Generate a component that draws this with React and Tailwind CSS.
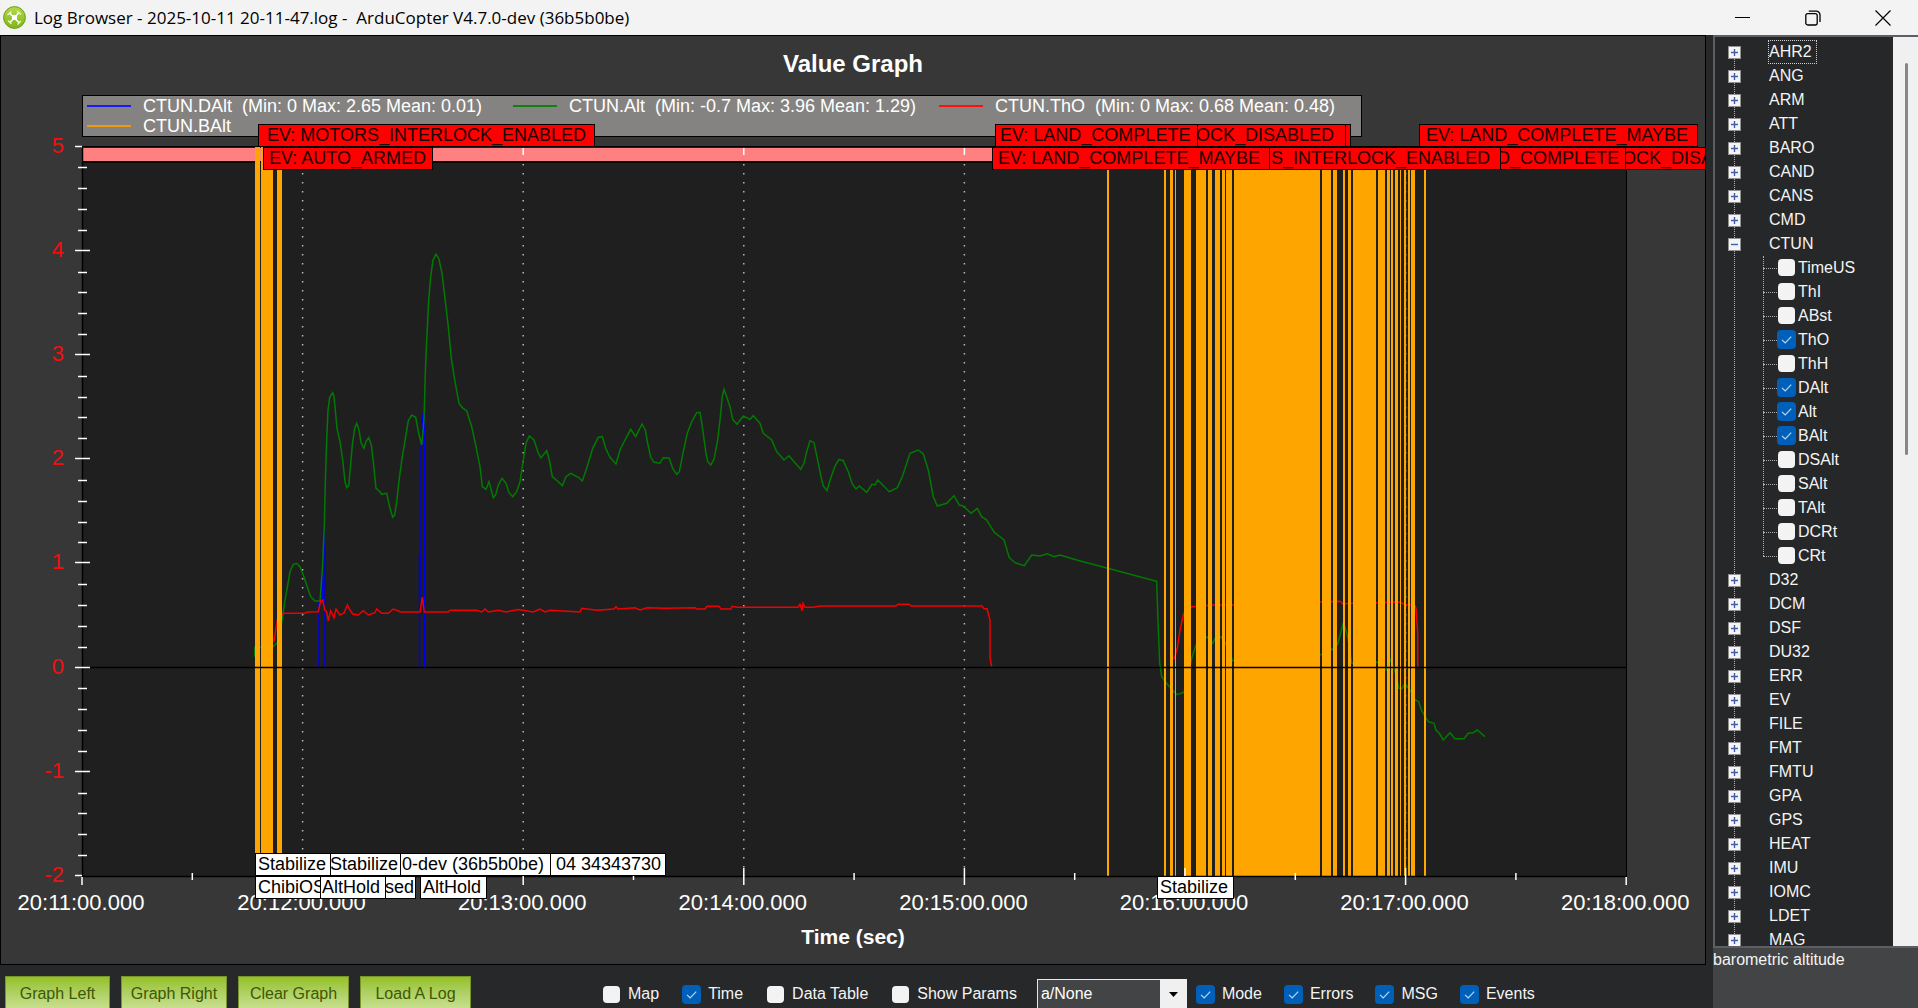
import { useState } from "react";

const ALT_A =
  "254.7,656.7 254.7,647.3 273,646.7 278,641.7 282.7,616.7 285,600 287.7,585 290,571.7 293.3,564.3 296.7,563.3 300,566.7 303.3,575 306.7,585 310.7,596.7 315,601 320,601 322.3,570 324.3,526.7 325.3,483.3 326.7,440 328,410 329.7,397.3 332.7,392.7 334,396.7 335.3,410 337,428.3 340,441.7 342.7,460 345,481.7 346.7,487.7 348.7,486 350.3,468.3 352.3,445 354.7,428.3 356.7,423.3 359,430 361,442.7 364,448.3 366,441.7 368.7,437.7 371.3,445 373.3,461.7 376,488.3 379.3,491 381.7,494.3 386.7,493.3 390,508.3 392.7,517.3 394.7,515 396.7,501.7 399.3,478.3 402.3,456.7 405.7,436.7 408.3,420.7 411.7,415 415.7,417.3 418.7,433.3 421.7,445 424,420 425.3,373.3 426.7,340 428.7,300 430.7,276.7 433,260 436,254.3 438.7,258.3 442,273.3 445,298.3 448.3,326.7 451.3,358.3 455,381.7 459,403.3 462.3,407.7 466.7,411 471.7,426.7 476,446.7 480,466.7 482.3,486.7 486,489.3 489,481.7 493.3,497.7 495.7,495 498.3,485 502,478.3 506,483.3 509,492.7 512.7,496.7 516.7,491.7 520,481.7 523.3,460 526,443.3 529.3,436 534,440 538.3,453.3 541,457.7 546.7,450.7 549.3,460 552.3,476.7 558.3,481.7 562.3,485.7 566,476.7 570.7,473.3 578.3,477.3 582.3,481 586.7,468.3 592.7,448.3 598.3,437.3 602.3,436.7";

const ALT_B =
  "605.7,448.3 610,457.3 616,464 620,450 625,440 630.7,429.3 635.7,436.7 642,424 645.3,430 647.7,443.3 650.7,457.3 654,462.3 660,463.3 663.3,457.7 669.3,458.3 672.7,468.3 676.7,474.3 679.3,471.7 683.3,451.7 687.3,433.3 691.7,421.7 696.7,412.7 700,412.3 702.3,426.7 706,453.3 707.7,461.7 710.7,465 714,459.3 717.7,440 720,420 722.3,396.7 724,389.3 726.7,396.7 730,406.7 732.7,419.3 737,424.3 743.3,416 750,419.3 753.3,415.7 760,423.3 763.3,433.3 771.7,440 776.7,451.7 784,460 789,455.7 795,462.7 800.7,469.3 804,463.3 806.7,451.7 810,440.7 814,442.7 817.3,458.3 821,476.7 823.3,486 827,490.7 830.7,478.3 835,466 839,459.3 843.3,460.7 848.3,471.7 852.3,484 856,489 859.3,486 866.7,492.3 872,484.3 875,485 877.7,480 882.7,485 889.3,491.7 897.3,487.7 902.3,476.7 910,453.3 918.3,450 923.3,454 928.3,470 933.3,496.7 937.3,506 946.7,503.3 954,495.7 959.3,505 963.3,506 971,513.3 977.3,508.3 981.7,516.7 986.7,520 994.3,532.3 1004,540 1009.3,557.7 1015,562.7 1024.3,565.7 1031.7,555 1040,556 1047.3,553.7 1054,556.7 1060,555 1076.7,560 1156.7,581.3 1158,621 1159.7,663.3 1161.7,676.7 1167.3,684.3 1174,691.7 1177.3,694.7 1184,692.3 1191.7,658.3 1196,645 1206.7,636.7 1212.7,643.3 1215,638.3 1220.7,636.7 1225.3,642.7 1232.7,660.7 1320.7,654.7 1332.3,649.3 1337.7,644 1343,624 1345,627.3 1347.7,636.7 1351.7,663.3 1376.7,662 1386,670 1390.3,660 1394.7,670 1399,688.3 1401.7,689 1405,683.3 1411,691.7 1415.3,700 1418.7,701.7 1421.7,710.7 1428.3,721.7 1434,723.3 1436,730 1439.3,733.3 1443.3,740 1450,732.7 1455,738.7 1464,738.7 1468.3,733.3 1473.3,732.7 1477.3,730 1485,736.7";

const THO_FLIGHT_1 =
  "274,641.7 277.3,620 283.3,613.3 305,613.3 307,612 318.3,611.7 320.7,600.7 322.7,600 324.7,610 326.7,611.7 328.3,620.7 330.7,610.7 334,617.7 336,609 340,615 344,613 347.3,605 350,610 352.7,614 358.3,615 363.3,610.7 368.3,615 375,612.7 376.7,609 381.7,613.3 388.3,613.3 393.3,609 400.7,612 420,612 422.3,597.3 424.3,612 448.3,612 450,610.3 476.7,610.3 481.7,612 485,609 488.3,612 498.3,610.3 506,612 518.3,609.5 533.3,612 540,609 545,612 550,610.3 580,612 581.7,608.3 596.7,610.3 614,609 616,606.7 618,609 635,607.7 640,610 647,607.7 665,608.3 695,607.7 697,609 705,609 707,606.3 719,606.3 721,609 731,609 732,606.3 737,607.3 798,607.3 800,604.3 802,610.7 803,603.3 805,607.3 813,607.3 820,606 896,606 898,604.3 909,604.3 911,606 982,606 984,608.7 987,608.7 990,620 990,658 991.7,666.7";

const THO_FLIGHT_2 =
  "1174,659.3 1177.3,648.3 1180,630 1183.7,613.3 1191.7,606.7 1213,605 1233,605 1320.7,602 1340,601.3 1343,604 1351.7,603.3 1376.7,602.7 1400,602 1405,604.7 1414.3,604.7 1416,608 1417.7,633.3 1417.7,666.7";

// [x, width] of every stretch where BAlt leaves the visible range
const BALT_BARS = [
  [255, 5],
  [261, 12],
  [277, 5],
  [1107, 2],
  [1164, 2],
  [1170, 3],
  [1175, 1],
  [1184, 7],
  [1196, 10],
  [1208, 4],
  [1215, 5],
  [1222, 3],
  [1226, 6],
  [1234, 86],
  [1322, 9],
  [1333, 4],
  [1343, 2],
  [1348, 3],
  [1353, 23],
  [1378, 7],
  [1387, 3],
  [1391, 2],
  [1395, 3],
  [1400, 1],
  [1404, 2],
  [1408, 2],
  [1411, 4],
  [1424, 2],
];

const DALT_LINES = [
  [319, 601, 667],
  [321, 588, 601],
  [322.7, 557, 600],
  [323.7, 518, 557],
  [325, 527, 667],
  [419.5, 554, 667],
  [421, 446, 597],
  [422.5, 414, 446],
  [424.5, 392, 667],
];

const EVENTS_TOP = [
  { x: 1190, end: 1351, tx: 0, text: "" },
  { x: 1190, end: 1346, tx: 1196, text: "OCK_DISABLED" },
  { x: 996, end: 1198, tx: 1000, text: "EV: LAND_COMPLETE" },
  { x: 1420, end: 1698, tx: 1426, text: "EV: LAND_COMPLETE_MAYBE" },
  { x: 259, end: 595, tx: 267, text: "EV: MOTORS_INTERLOCK_ENABLED" },
];

const EVENTS_BOTTOM = [
  { x: 1610, end: 1720, tx: 1622, text: "OCK_DISA" },
  { x: 1490, end: 1626, tx: 1497, text: "D_COMPLETE" },
  { x: 1260, end: 1501, tx: 1271, text: "S_INTERLOCK_ENABLED" },
  { x: 993, end: 1270, tx: 998, text: "EV: LAND_COMPLETE_MAYBE" },
  { x: 264, end: 433, tx: 269, text: "EV: AUTO_ARMED" },
];

const MESSAGES_TOP = [
  { x: 540, end: 666, tx: 556, text: "04 34343730" },
  { x: 380, end: 551, tx: 402, text: "0-dev (36b5b0be)" },
  { x: 331, end: 401, tx: 330, text: "Stabilize" },
  { x: 256, end: 331, tx: 258, text: "Stabilize" },
];

const MESSAGES_BOTTOM = [
  { x: 380, end: 416, tx: 385, text: "sed" },
  { x: 256, end: 386, tx: 258, text: "ChibiOS" },
  { x: 321, end: 386, tx: 322, text: "AltHold" },
  { x: 421, end: 487, tx: 423, text: "AltHold" },
  { x: 1158, end: 1234, tx: 1160, text: "Stabilize" },
];

const X_LABELS = ["20:11", "20:12", "20:13", "20:14", "20:15", "20:16", "20:17", "20:18"];
const Y_LABELS = [5, 4, 3, 2, 1, 0, -1, -2];

const xOf = (minute) => 82 + minute * 220.6;
const yOf = (value) => 667.5 - value * 104.2;

const legend = [
  { name: "CTUN.DAlt  (Min: 0 Max: 2.65 Mean: 0.01)", line: "bg-[#1a1aff]" },
  { name: "CTUN.Alt  (Min: -0.7 Max: 3.96 Mean: 1.29)", line: "bg-[#118011]" },
  { name: "CTUN.ThO  (Min: 0 Max: 0.68 Mean: 0.48)", line: "bg-[#ff1010]" },
  { name: "CTUN.BAlt", line: "bg-[#ee9a10]" },
];

const ctunFields = [
  ["TimeUS", false],
  ["ThI", false],
  ["ABst", false],
  ["ThO", true],
  ["ThH", false],
  ["DAlt", true],
  ["Alt", true],
  ["BAlt", true],
  ["DSAlt", false],
  ["SAlt", false],
  ["TAlt", false],
  ["DCRt", false],
  ["CRt", false],
];

const nodesBefore = ["AHR2", "ANG", "ARM", "ATT", "BARO", "CAND", "CANS", "CMD"];
const nodesAfter = [
  "D32", "DCM", "DSF", "DU32", "ERR", "EV", "FILE", "FMT",
  "FMTU", "GPA", "GPS", "HEAT", "IMU", "IOMC", "LDET", "MAG",
];

function Check({ label, defaultChecked, className }) {
  const [checked, setChecked] = useState(defaultChecked);
  return (
    <label className={`flex whitespace-nowrap ${className}`}>
      <span className="relative flex size-[19px] shrink-0">
        <input
          type="checkbox"
          checked={checked}
          onChange={(e) => setChecked(e.target.checked)}
          className="m-px size-[17px] appearance-none rounded-[4px] bg-[#f3f3f3] checked:m-0 checked:size-[19px] checked:bg-[#005fb8]"
        />
        {checked && (
          <svg className="pointer-events-none absolute inset-0" width="19" height="19" viewBox="0 0 19 19">
            <path d="M5 9.8 8.2 13 14.2 6.6" fill="none" stroke="#b9d8f2" strokeWidth="1.2" />
          </svg>
        )}
      </span>
      <span>{label}</span>
    </label>
  );
}

function Tags({ items, y, fill, color }) {
  return items.map((t) => (
    <g key={`${t.x}-${t.end}`}>
      <rect x={t.x - 0.5} y={y + 0.5} width={t.end - t.x} height="22" fill={fill} stroke="#000" />
      {t.text && (
        <text x={t.tx} y={y + 17} fontSize="18" fill={color}>
          {t.text}
        </text>
      )}
    </g>
  ));
}

function Chart() {
  return (
    <svg
      className="relative -mt-[13px] block h-auto w-full"
      viewBox="1 124 1704 792"
      fontFamily='"Liberation Sans", Arial, sans-serif'
    >
      <rect x="82.5" y="146.5" width="1544" height="730" fill="#1f1f1f" stroke="#000" />
      <rect x="83" y="148" width="1543" height="13" fill="#ff8080" />
      <path d="M83 162H1626" stroke="#000" strokeWidth="1.5" />

      {[1, 2, 3, 4, 5, 6].map((m) => (
        <path
          key={m}
          d={`M${xOf(m)} 164V876`}
          stroke="#b8b8b8"
          strokeWidth="1.5"
          strokeDasharray="1.5 7.5"
        />
      ))}

      <g fill="none" strokeWidth="1.5">
        {DALT_LINES.map(([x, y1, y2]) => (
          <path key={x} d={`M${x} ${y1}V${y2}`} stroke="#0000e6" />
        ))}
        <polyline points={`${ALT_A} ${ALT_B}`} stroke="#007a00" />
        <polyline points={THO_FLIGHT_1} stroke="#f00000" />
        <polyline points={THO_FLIGHT_2} stroke="#f00000" />
      </g>

      {BALT_BARS.map(([x, w]) => (
        <rect key={x} x={x} y="147" width={w} height="729" fill="#ffa500" />
      ))}

      <path d="M82 667.5H1626M82.5 146V877M82 876.5H1627" stroke="#000" strokeWidth="1.5" />

      {/* axis ticks */}
      <g stroke="#fff" strokeWidth="1.5">
        {Y_LABELS.map((v) => (
          <path key={v} d={`M75 ${Math.round(yOf(v)) - 0.5}H${v === 5 || v === -2 ? 82 : 90}`} />
        ))}
        {Array.from({ length: 34 }, (_, i) => i + 1)
          .filter((i) => i % 5 !== 0)
          .map((i) => (
            <path key={i} d={`M78 ${Math.round(yOf(5 - i / 5)) + 0.5}H87`} />
          ))}
        {X_LABELS.map((label, i) => (
          <path key={label} d={`M${xOf(i)} ${i === 0 || i === 7 ? 877 : 868}V885`} />
        ))}
        {[0, 1, 2, 3, 4, 5, 6].map((i) => (
          <path key={i} d={`M${xOf(i + 0.5)} 873V880`} />
        ))}
        {[1, 2, 3, 4].map((i) => (
          <path key={i} d={`M${xOf(i)} 148V155`} />
        ))}
      </g>

      <g fontSize="22">
        {Y_LABELS.map((v) => (
          <text key={v} x="64" y={Math.round(yOf(v)) + 6} textAnchor="end" fill="#f01010">
            {v}
          </text>
        ))}
        {X_LABELS.map((label, i) => (
          <text key={label} x={xOf(i) - 1} y="910" textAnchor="middle" fill="#fff">
            {`${label}:00.000`}
          </text>
        ))}
      </g>

      <Tags items={EVENTS_TOP} y={124} fill="#ff0000" color="#200000" />
      <Tags items={EVENTS_BOTTOM} y={147} fill="#ff0000" color="#200000" />
      <Tags items={MESSAGES_TOP} y={853} fill="#ffffff" color="#000000" />
      <Tags items={MESSAGES_BOTTOM} y={876} fill="#ffffff" color="#000000" />
    </svg>
  );
}

function ExpandBox({ open }) {
  return (
    <svg width="13" height="13" viewBox="0 0 13 13">
      <rect x="0.5" y="0.5" width="12" height="12" fill="#f4f4f4" stroke="#919191" />
      <path d={open ? "M3 6.5h7" : "M3 6.5h7M6.5 3v7"} stroke="#3f5fae" strokeWidth="1.4" />
    </svg>
  );
}

function TreeNode({ name, open, focused }) {
  return (
    <li className="flex h-6 items-center">
      <button type="button" aria-label={`Toggle ${name}`} className="relative">
        <ExpandBox open={open} />
      </button>
      <span
        className={`ml-[27px] flex h-6 items-center border border-dotted pr-1 ${
          focused ? "border-[#d0d0d0]" : "border-transparent"
        }`}
      >
        {name}
      </span>
    </li>
  );
}

function LogTree() {
  return (
    <div className="flex min-h-0 flex-1 overflow-hidden border-2 border-r-0 border-[#5c5e63] bg-[#262728]">
      <div className="relative flex-1 overflow-hidden pt-[3px] pl-[13px]">
        <div className="absolute top-4 bottom-0 left-[19px] border-l border-dotted border-[#b0b0b0]" />
        <ul>
          {nodesBefore.map((name, i) => (
            <TreeNode key={name} name={name} focused={i === 0} />
          ))}
          <TreeNode name="CTUN" open />
          <li className="relative pl-[35px]">
            <div className="absolute top-0 bottom-3 left-[35px] border-l border-dotted border-[#b0b0b0]" />
            <ul>
              {ctunFields.map(([name, on]) => (
                <li key={name} className="flex h-6 items-center">
                  <span className="w-3.5 border-t border-dotted border-[#b0b0b0]" />
                  <Check label={name} defaultChecked={on} className="items-start gap-0.5" />
                </li>
              ))}
            </ul>
          </li>
          {nodesAfter.map((name) => (
            <TreeNode key={name} name={name} />
          ))}
        </ul>
      </div>
      <div className="w-[25px] bg-[#f0f0f0] pt-[26px] pl-3">
        <div className="h-[392px] w-[3px] rounded bg-[#868686]" />
      </div>
    </div>
  );
}

function ToolButton({ children, className }) {
  return (
    <button
      type="button"
      className={`h-9 border border-[#79942b] bg-linear-to-b from-[#94c11f] to-[#cde296] text-[#405704] ${className}`}
    >
      {children}
    </button>
  );
}

function TitleBar() {
  return (
    <header className="flex h-[35px] shrink-0 items-center bg-[#f3f3f3] pl-[3px] text-black">
      <svg width="23" height="23" viewBox="0 0 23 23">
        <defs>
          <linearGradient id="logo" x1="0" y1="0" x2="0" y2="1">
            <stop offset="0" stopColor="#b4d84a" />
            <stop offset="1" stopColor="#7fb518" />
          </linearGradient>
        </defs>
        <circle cx="11.5" cy="11.5" r="10.9" fill="url(#logo)" stroke="#6f9d1c" />
        <path d="M6.500 7 16.500 17M16 6.500 7 16.500" stroke="#fff" strokeWidth="1.6" />
        <path d="M4.500 9 8.500 5.500M14 5 18 8.500M5 14.500l3.500 3.500M14.500 18.500l3.500-3.500" stroke="#eef7d8" strokeWidth="1.2" />
        <circle cx="11.5" cy="11.5" r="2.6" fill="#fff" />
      </svg>
      <h1 className="ml-2 flex-1 font-['Open_Sans',sans-serif] text-[17px] whitespace-pre">
        Log Browser - 2025-10-11 20-11-47.log -  ArduCopter V4.7.0-dev (36b5b0be)
      </h1>
      <button type="button" aria-label="Minimize" className="flex h-full w-[70px] items-center justify-center">
        <svg width="16" height="16" viewBox="0 0 16 16">
          <path d="M0 7.5h15" stroke="#000" />
        </svg>
      </button>
      <button type="button" aria-label="Restore" className="flex h-full w-[70px] items-center justify-center">
        <svg width="16" height="16" viewBox="0 0 16 16" fill="none" stroke="#000" strokeWidth="1.3">
          <rect x="0.8" y="3.6" width="11.4" height="11.4" rx="2" />
          <path d="M3.8 1.2h7.4a3.8 3.8 0 0 1 3.8 3.8v7" />
        </svg>
      </button>
      <button type="button" aria-label="Close" className="flex h-full w-[70px] items-center justify-center">
        <svg width="16" height="16" viewBox="0 0 16 16">
          <path d="M0.5 0.5l15 15M15.5 0.5l-15 15" stroke="#000" strokeWidth="1.2" />
        </svg>
      </button>
    </header>
  );
}

function Toolbar() {
  return (
    <div className="flex h-[43px] shrink-0 items-start overflow-hidden pt-[11px] pl-[5px]">
      <div className="flex gap-[11px]">
        <ToolButton className="w-[105px]">Graph Left</ToolButton>
        <ToolButton className="w-[106px]">Graph Right</ToolButton>
        <ToolButton className="w-[111px]">Clear Graph</ToolButton>
        <ToolButton className="w-[111px]">Load A Log</ToolButton>
      </div>
      <div className="ml-[131px] flex h-9 items-center gap-[23px]">
        <Check label="Map" defaultChecked={false} className="items-center gap-[7px]" />
        <Check label="Time" defaultChecked className="items-center gap-[7px]" />
        <Check label="Data Table" defaultChecked={false} className="items-center gap-[7px]" />
        <Check label="Show Params" defaultChecked={false} className="items-center gap-[7px]" />
      </div>
      <div className="relative mt-[3px] ml-5 w-[150px]">
        <select
          aria-label="Preset graph"
          className="h-[30px] w-full appearance-none border border-[#e8e8e8] bg-[#434445] pl-[3px] text-white"
        >
          <option>a/None</option>
        </select>
        <span className="pointer-events-none absolute inset-y-0 right-0 flex w-[27px] items-center justify-center bg-[#f0f0f0]">
          <svg width="9" height="5" viewBox="0 0 9 5">
            <path d="M0 0h9L4.500 5z" fill="#000" />
          </svg>
        </span>
      </div>
      <div className="ml-[9px] flex h-9 items-center gap-[22px]">
        <Check label="Mode" defaultChecked className="items-center gap-[7px]" />
        <Check label="Errors" defaultChecked className="items-center gap-[7px]" />
        <Check label="MSG" defaultChecked className="items-center gap-[7px]" />
        <Check label="Events" defaultChecked className="items-center gap-[7px]" />
      </div>
    </div>
  );
}

export default function App() {
  return (
    <div className="flex h-screen flex-col overflow-hidden bg-[#262829] font-['Liberation_Sans',Arial,sans-serif] text-[16px] leading-5 text-[#f4f4f4]">
      <TitleBar />
      <main className="flex min-h-0 flex-1">
        <div className="flex min-w-0 flex-1 flex-col">
          <section className="mr-[7px] min-h-0 flex-1 overflow-hidden border border-black bg-[#373737]">
            <h2 className="mt-3.5 text-center text-[24px] leading-7 font-bold text-white">Value Graph</h2>
            <ul className="mt-[17px] mr-[343px] ml-[81px] grid grid-cols-3 border border-black bg-[#858381] text-[18px] text-white">
              {legend.map((item) => (
                <li key={item.name} className="flex items-center gap-3 pl-1 whitespace-pre">
                  <span className={`h-0.5 w-11 ${item.line}`} />
                  {item.name}
                </li>
              ))}
            </ul>
            <Chart />
            <p className="mt-[7px] text-center text-[21px] leading-7 font-bold text-white">Time (sec)</p>
          </section>
          <Toolbar />
        </div>
        <aside className="flex w-[205px] shrink-0 flex-col">
          <LogTree />
          <p className="h-[60px] shrink-0 bg-[#434445] pt-0.5">barometric altitude</p>
        </aside>
      </main>
    </div>
  );
}
